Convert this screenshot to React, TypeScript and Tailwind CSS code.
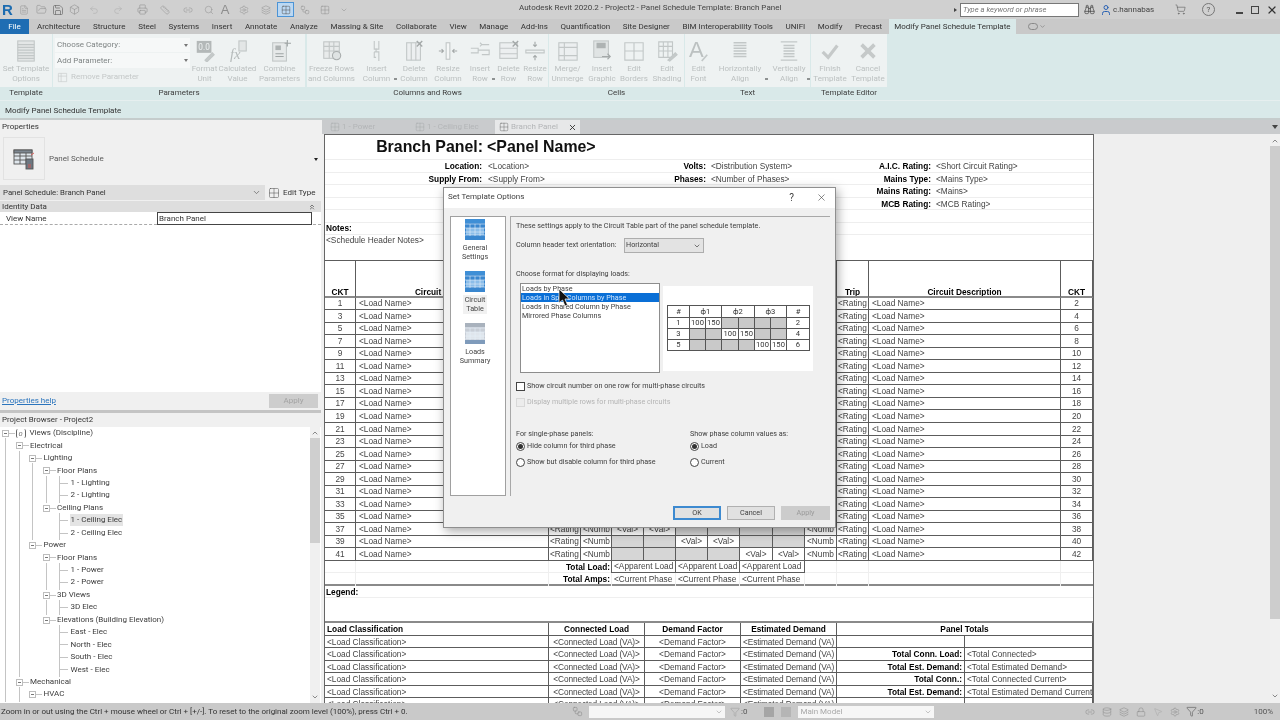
import type { ReactNode } from 'react';
import {
  Binoculars, Box, ChevronDown, ChevronUp, ChevronsUp, Database, FileText, Filter, FolderOpen, Grid2x2, Layers,
  Link2, Lock, MousePointer2, Printer, Redo2, Ruler, Save, Search, Settings, ShoppingCart, Undo2,
  User, Workflow, X,
} from 'lucide-react';

const GRID_CIRCUIT = 'grid grid-cols-[31px_193px_32px_31px_32px_32px_32px_32px_33px_32px_32px_32px_192px_32px]';
const GRID_LOADS = 'grid grid-cols-[224px_96px_96px_96px_128px_128px]';
const CELL = 'border-r border-b border-[#5c5c5c] overflow-hidden whitespace-nowrap flex items-center';

function Ico({ children, w = 22, h = 22 }: { children: ReactNode; w?: number; h?: number }) {
  return (
    <svg viewBox="0 0 24 24" width={w} height={h} fill="none" stroke="#c2c7c7" strokeWidth="1.2">
      {children}
    </svg>
  );
}

function Tool({ w, a, b, icon, arrow }: { w: string; a: string; b: string; icon: ReactNode; arrow?: boolean }) {
  return (
    <div className={`${w} relative flex flex-col items-center`}>
      <div className="h-[30px] pt-[3px] flex items-center justify-center">{icon}</div>
      <div className="text-[8px] leading-[10px] text-[#bcc1c1] text-center whitespace-nowrap">
        <div>{a}</div>
        <div>{b}</div>
      </div>
      {arrow && <span className="absolute right-[0px] top-[44px] w-[3px] h-[2px] bg-[#8e9292]" />}
    </div>
  );
}

function Panel({ w, title, children }: { w: string; title: string; children: ReactNode }) {
  return (
    <div className={`${w} flex flex-col`}>
      <div className="h-[53px] bg-[#eef2f2] flex">{children}</div>
      <div className="h-[13px] bg-[#d9e9e9] text-[8px] leading-[11px] text-center text-[#3d3d3d]">{title}</div>
    </div>
  );
}

const TableLines = () => (
  <>
    <rect x="3" y="1" width="18" height="22" fill="#e3e6e6" />
    <path d="M3 5h18M3 8h18M3 11h18M3 14h18M3 17h18M3 20h18" />
  </>
);

function Ribbon() {
  return (
    <div className="flex bg-[#d9e9e9] h-[66px]">
      <Panel w="w-[52px] mr-[1px]" title="Template">
        <Tool w="w-[52px]" a="Set Template" b="Options" icon={<Ico><TableLines /></Ico>} />
      </Panel>
      <Panel w="w-[252px] mr-[2px]" title="Parameters">
        <div className="w-[137px] pl-[2px] pt-[4px] flex flex-col">
          <div className="h-[14px] bg-[#f6f8f8] flex items-center justify-between px-[2px] text-[8px] text-[#7f8484]">
            <span>Choose Category:</span>
            <span className="w-0 h-0 border-x-[2.5px] border-x-transparent border-t-[3px] border-t-[#777]" />
          </div>
          <div className="mt-[1px] h-[15px] bg-[#f6f8f8] flex items-center justify-between px-[2px] text-[8px] text-[#7f8484]">
            <span>Add Parameter:</span>
            <span className="w-0 h-0 border-x-[2.5px] border-x-transparent border-t-[3px] border-t-[#777]" />
          </div>
          <div className="mt-[3px] flex items-center gap-[3px] pl-[2px] text-[8px] text-[#c4c8c8]">
            <Ico w={11} h={11}><path d="M3 3h18v18H3zM3 9h18M9 3v18" /></Ico>
            <span>Remove Parameter</span>
          </div>
        </div>
        <Tool w="w-[29px]" a="Format" b="Unit" icon={
          <Ico>
            <rect x="3" y="1" width="16" height="13" fill="#b3b8b8" stroke="none" />
            <text x="11" y="11" fontSize="9" fill="#eef2f2" stroke="none" textAnchor="middle">0.0</text>
            <path d="M12 22l8-8 2 2-8 8z" fill="#c5caca" />
          </Ico>
        } />
        <Tool w="w-[37px]" a="Calculated" b="Value" icon={
          <Ico>
            <rect x="13" y="1" width="8" height="11" fill="#e3e6e6" />
            <text x="9" y="21" fontSize="16" fontStyle="italic" fontFamily="Liberation Serif" fill="#b5baba" stroke="none" textAnchor="middle">fx</text>
          </Ico>
        } />
        <Tool w="w-[47px]" a="Combine" b="Parameters" icon={
          <Ico>
            <rect x="4" y="3" width="15" height="20" fill="#e6e9e9" />
            <rect x="7" y="6" width="6" height="5" fill="#aeb3b3" stroke="none" />
            <path d="M7 15h9M7 18h9M20 0v7M17 3.5h7" stroke="#9fa5a5" />
          </Ico>
        } />
      </Panel>
      <Panel w="w-[241px] mr-[1px]" title="Columns and Rows">
        <Tool w="w-[49px]" a="Freeze Rows" b="and Columns" icon={
          <Ico>
            <rect x="3" y="2" width="17" height="18" fill="#e8ebeb" />
            <path d="M3 7h17M3 12h17M9 2v18M14 2v18" />
            <circle cx="17" cy="17" r="4.5" fill="#dfe3e3" stroke="#a9aeae" />
          </Ico>
        } />
        <Tool w="w-[41px]" arrow a="Insert" b="Column" icon={
          <Ico><path d="M9 1v9h5V1M9 13h5v10M9 13v6h2M11 9v4" /></Ico>
        } />
        <Tool w="w-[34px]" a="Delete" b="Column" icon={
          <Ico>
            <rect x="4" y="3" width="15" height="19" fill="#eceff0" />
            <path d="M9 3v19M14 3v19" />
            <path d="M15 1l6 6M21 1l-6 6" stroke="#a3a8a8" strokeWidth="1.5" />
          </Ico>
        } />
        <Tool w="w-[34px]" a="Resize" b="Column" icon={
          <Ico>
            <rect x="10" y="3" width="4" height="18" fill="#f5f7f7" />
            <path d="M2 12h5M5 10l2 2-2 2M22 12h-5M19 10l-2 2 2 2" stroke="#a3a8a8" />
          </Ico>
        } />
        <Tool w="w-[30px]" arrow a="Insert" b="Row" icon={
          <Ico><path d="M2 9h8v5H2M14 5h8M14 11h8v5h-8M10 11h4M12 7l2-2-2-2" /></Ico>
        } />
        <Tool w="w-[27px]" a="Delete" b="Row" icon={
          <Ico>
            <rect x="2" y="3" width="19" height="17" fill="#eceff0" />
            <path d="M2 9h19M2 15h19" />
            <path d="M16 1l6 6M22 1l-6 6" stroke="#a3a8a8" strokeWidth="1.5" />
          </Ico>
        } />
        <Tool w="w-[26px]" a="Resize" b="Row" icon={
          <Ico>
            <path d="M2 11h20v3H2z" />
            <path d="M12 2v5M10 5l2 2 2-2M12 22v-5M10 19l2-2 2 2" stroke="#a3a8a8" />
          </Ico>
        } />
      </Panel>
      <Panel w="w-[135px] mr-[1px]" title="Cells">
        <Tool w="w-[37px]" a="Merge/" b="Unmerge" icon={
          <Ico>
            <rect x="2" y="3" width="20" height="19" fill="#eceff0" />
            <path d="M2 8h20M2 17h20M8 3v19" />
          </Ico>
        } />
        <Tool w="w-[32px]" a="Insert" b="Graphic" icon={
          <Ico>
            <rect x="3" y="1" width="16" height="18" fill="#e0e4e4" />
            <rect x="6" y="3" width="10" height="6" fill="#aeb3b3" stroke="none" />
            <path d="M12 18h9M18 15l3 3-3 3" stroke="#a3a8a8" />
          </Ico>
        } />
        <Tool w="w-[32px]" a="Edit" b="Borders" icon={<Ico><path d="M2 3h20v19H2zM2 12h20M12 3v19" /></Ico>} />
        <Tool w="w-[34px]" a="Edit" b="Shading" icon={
          <Ico>
            <path d="M3 2h15v17H3zM3 7h15M3 12h15M8 2v17M13 2v17" />
            <path d="M13 22l8-8 2 2-8 7z" fill="#c5caca" />
          </Ico>
        } />
      </Panel>
      <Panel w="w-[125px] mr-[1px]" title="Text">
        <Tool w="w-[27px]" a="Edit" b="Font" icon={
          <Ico>
            <text x="9" y="19" fontSize="24" fontFamily="Liberation Sans" fill="#bcc1c1" stroke="none" textAnchor="middle">A</text>
            <path d="M15 23l6-7" strokeWidth="1.8" />
          </Ico>
        } />
        <Tool w="w-[56px]" arrow a="Horizontally" b="Align" icon={
          <Ico><path d="M5 3h14M5 6h14M5 9h14M5 12h14M5 15h14M5 18h14" strokeWidth="1.6" /></Ico>
        } />
        <Tool w="w-[42px]" arrow a="Vertically" b="Align" icon={
          <Ico><path d="M3 2h18M6 6h12M6 9h12M6 12h12M6 15h12M6 18h12M3 22h18" strokeWidth="1.4" /></Ico>
        } />
      </Panel>
      <Panel w="w-[76px]" title="Template Editor">
        <Tool w="w-[38px]" a="Finish" b="Template" icon={<Ico><path d="M4 13l6 6L20 6" stroke="#c5c9c9" strokeWidth="3.5" /></Ico>} />
        <Tool w="w-[38px]" a="Cancel" b="Template" icon={<Ico><path d="M5 5l14 14M19 5L5 19" stroke="#c5c9c9" strokeWidth="4" /></Ico>} />
      </Panel>
    </div>
  );
}

const TABS = ['Architecture', 'Structure', 'Steel', 'Systems', 'Insert', 'Annotate', 'Analyze', 'Massing & Site', 'Collaborate', 'View', 'Manage', 'Add-Ins', 'Quantification', 'Site Designer', 'BIM Interoperability Tools', 'UNIFI', 'Modify', 'Precast'];

function TopBars() {
  return (
    <>
      <div className="h-[19px] bg-[#d0d0d0] flex items-center relative">
        <div className="w-[15px] pl-[2px] text-[15px] leading-[15px] font-bold text-[#1d6cb0] font-['Liberation_Sans',sans-serif]">R</div>
        <div className="flex items-center text-[#8e8e8e]">
          <span className="w-[17px] flex justify-center"><FileText size={10} strokeWidth={1.2} /></span>
          <span className="w-[18px] flex justify-center"><FolderOpen size={11} strokeWidth={1.2} /></span>
          <span className="w-[16px] flex justify-center text-[#6c6c6c]"><Save size={12} strokeWidth={1.4} /></span>
          <span className="w-[17px] flex justify-center"><Box size={11} strokeWidth={1.2} /></span>
          <span className="w-[22px] flex justify-center text-[#a8a8a8]"><Undo2 size={10} strokeWidth={1.2} /></span>
          <span className="w-[25px] flex justify-center text-[#a8a8a8]"><Redo2 size={10} strokeWidth={1.2} /></span>
          <span className="w-[25px] flex justify-center"><Printer size={11} strokeWidth={1.2} /></span>
          <span className="w-[20px] flex justify-center"><Ruler size={10} strokeWidth={1.2} /></span>
          <span className="w-[26px] flex justify-center"><Link2 size={10} strokeWidth={1.2} /></span>
          <span className="w-[16px] flex justify-center"><Search size={10} strokeWidth={1.2} /></span>
          <span className="w-[16px] text-center text-[13px] leading-[13px] font-['Liberation_Sans',sans-serif]">A</span>
          <span className="w-[22px] flex justify-center"><Settings size={10} strokeWidth={1.2} /></span>
          <span className="w-[22px] flex justify-center"><Layers size={10} strokeWidth={1.2} /></span>
          <span className="w-[17px] h-[15px] bg-[#bcd8f2] border border-[#4c94d6] flex items-center justify-center">
            <Grid2x2 size={10} strokeWidth={1.2} className="text-[#4f4f4f]" />
          </span>
          <span className="w-[22px] flex justify-center"><Workflow size={10} strokeWidth={1.2} /></span>
          <span className="w-[18px] flex justify-center"><Grid2x2 size={10} strokeWidth={1.2} /></span>
          <span className="w-[20px] flex justify-center"><ChevronDown size={8} strokeWidth={1.5} /></span>
        </div>
        <div className="absolute left-[519px] top-0 h-[19px] text-[8px] leading-[15px] text-[#444] whitespace-nowrap">
          Autodesk Revit 2020.2 - Project2 - Panel Schedule Template: Branch Panel
        </div>
        <div className="ml-auto flex items-center">
          <span className="w-0 h-0 mr-[3px] border-y-[2.5px] border-y-transparent border-l-[3px] border-l-[#444]" />
          <div className="w-[119px] h-[14px] bg-white border border-[#777] text-[7.6px] leading-[12px] italic text-[#777] pl-[2px]">Type a keyword or phrase</div>
          <span className="w-[21px] flex justify-center text-[#444]"><Binoculars size={11} strokeWidth={1.6} /></span>
          <User size={12} strokeWidth={2} className="text-[#2a62b3]" />
          <span className="ml-[1px] w-[62px] text-[8px] text-[#444]">c.hannabas</span>
          <ShoppingCart size={11} strokeWidth={1.2} className="text-[#555]" />
          <span className="ml-[16px] w-[13px] h-[13px] rounded-full border border-[#777] text-[8px] leading-[11px] text-center text-[#555]">?</span>
          <span className="ml-[21px] w-[7px] h-[2px] mt-[6px] bg-[#444]" />
          <span className="ml-[8px] w-[8px] h-[8px] border border-[#444]" />
          <X size={12} strokeWidth={2.4} className="ml-[7px] mr-[2px] text-[#333]" />
        </div>
      </div>
      <div className="h-[15px] bg-[#c9c9c9] flex items-stretch text-[8px] leading-[15px] text-[#333] whitespace-nowrap">
        <div className="w-[29px] bg-[#1f6db3] text-white text-center">File</div>
        <div className="ml-[8px] flex gap-[12.6px]">
          {TABS.map((t) => (
            <div key={t}>{t}</div>
          ))}
        </div>
        <div className="ml-[7px] px-[5px] bg-[#d9e9e9] text-center">Modify Panel Schedule Template</div>
        <div className="ml-[12px] flex items-center gap-[1px] text-[#777]">
          <span className="w-[10px] h-[7px] rounded-full border border-[#888]" />
          <ChevronDown size={7} />
        </div>
      </div>
      <Ribbon />
      <div className="h-[18px] bg-[#d9e9e9] border-t border-[#e6efef] text-[8px] leading-[19px] pl-[5px] text-[#333]">Modify Panel Schedule Template</div>
      <div className="h-[2px] bg-[#c5cccc]" />
    </>
  );
}

const TREE: [string, number, number[], boolean?][] = [
  ['Views (Discipline)', 0, []],
  ['Electrical', 1, [0]],
  ['Lighting', 2, [0, 1]],
  ['Floor Plans', 3, [0, 1, 2]],
  ['1 - Lighting', 4, [0, 1, 2, 3]],
  ['2 - Lighting', 4, [0, 1, 2, 3]],
  ['Ceiling Plans', 3, [0, 1, 2]],
  ['1 - Ceiling Elec', 4, [0, 1, 2], true],
  ['2 - Ceiling Elec', 4, [0, 1, 2]],
  ['Power', 2, [0, 1]],
  ['Floor Plans', 3, [0, 1]],
  ['1 - Power', 4, [0, 1, 3]],
  ['2 - Power', 4, [0, 1, 3]],
  ['3D Views', 3, [0, 1]],
  ['3D Elec', 4, [0, 1, 3]],
  ['Elevations (Building Elevation)', 3, [0, 1]],
  ['East - Elec', 4, [0, 1]],
  ['North - Elec', 4, [0, 1]],
  ['South - Elec', 4, [0, 1]],
  ['West - Elec', 4, [0, 1]],
  ['Mechanical', 1, [0]],
  ['HVAC', 2, [0, 1]],
];

function TreeRow({ text, depth, guides, selected }: { text: string; depth: number; guides: number[]; selected?: boolean }) {
  const cols = [0, 1, 2, 3, 4];
  return (
    <div className="h-[12.45px] flex items-center pl-[2px]">
      {cols.filter((c) => c <= depth).map((c) => (
        <div key={c} className="w-[13.5px] h-full relative shrink-0">
          {(guides.includes(c) || (c === 4 && depth === 4)) && <span className="absolute left-[3px] -top-px -bottom-px w-px bg-[#c4c4c4]" />}
          {c === depth && depth < 4 && (
            <>
              <span className="absolute left-[7px] top-[6px] w-[6px] h-px bg-[#c4c4c4]" />
              <span className="absolute left-0 top-[3px] w-[7px] h-[7px] bg-white border border-[#bdbdbd] flex items-center justify-center">
                <span className="w-[3px] h-px bg-[#777]" />
              </span>
            </>
          )}
          {c === 4 && <span className="absolute left-[3px] top-[6px] w-[9px] h-px bg-[#c4c4c4]" />}
        </div>
      ))}
      {depth === 0 && (
        <span className="w-[10px] h-[9px] mr-[3px] border-x border-[#666] rounded-[2px] flex items-center justify-center text-[6px] italic text-[#555]">O</span>
      )}
      <span className={`${selected ? 'bg-[#e4e4e4]' : ''} px-[1px] text-[8px] leading-[12px] text-[#3c3c3c] whitespace-nowrap`}>{text}</span>
    </div>
  );
}

function LeftPanels() {
  return (
    <div className="w-[321px] mr-px flex flex-col bg-[#f0f0f0] text-[#333]">
      <div className="h-[14px] text-[8px] leading-[14px] pl-[2px]">Properties</div>
      <div className="h-[51px] pt-[3px] pl-[3px] pr-[3px] flex items-start relative">
        <div className="w-[42px] h-[43px] border border-[#e2e2e2] flex items-center justify-center">
          <svg viewBox="0 0 24 24" width="24" height="24" fill="none" stroke="#555" strokeWidth="0.9">
            <rect x="2" y="3" width="18" height="14" fill="#dfe6ec" />
            <rect x="2" y="3" width="18" height="3" fill="#7d8791" />
            <path d="M2 9h18M2 13h18M8 6v11M14 6v11" />
            <rect x="14" y="12" width="7" height="10" fill="#6d7781" />
            <path d="M16 18h3M16 20h3M19 8l3-2" stroke="#d9534f" />
          </svg>
        </div>
        <span className="ml-[4px] mt-[16px] text-[8px] text-[#5a5a5a]">Panel Schedule</span>
        <span className="absolute right-[3px] top-[24px] w-0 h-0 border-x-[2.5px] border-x-transparent border-t-[3px] border-t-[#222]" />
      </div>
      <div className="h-[15px] flex">
        <div className="w-[265px] bg-[#dedede] flex items-center justify-between pl-[3px] pr-[4px] text-[7.8px]">
          <span>Panel Schedule: Branch Panel</span>
          <ChevronDown size={9} className="text-[#666]" />
        </div>
        <div className="flex items-center pl-[3px] text-[8px]">
          <Grid2x2 size={12} strokeWidth={1.1} className="text-[#555]" />
          <span className="ml-[3px]">Edit Type</span>
        </div>
      </div>
      <div className="h-[1px]" />
      <div className="h-[11px] bg-[#dedede] flex items-center justify-between pl-[2px] pr-[5px] text-[8px] leading-[11px]">
        <span>Identity Data</span>
        <ChevronsUp size={8} strokeWidth={2} className="text-[#444]" />
      </div>
      <div className="flex-1 bg-white">
        <div className="h-[13px] flex border-b border-dashed border-[#aaa] text-[8px] leading-[13px]">
          <div className="w-[157px] pl-[6px]">View Name</div>
          <div className="w-[155px] h-[13px] border border-[#444] pl-[1px] leading-[11px]">Branch Panel</div>
        </div>
      </div>
      <div className="h-[18px] flex items-center justify-between pl-[2px] pr-[3px] text-[8px]">
        <span className="text-[#2a74bd] underline">Properties help</span>
        <span className="w-[49px] h-[14px] bg-[#cdcdcd] text-center text-[#a3a3a3] leading-[14px]">Apply</span>
      </div>
      <div className="h-[3px] bg-[#c4c4c4]" />
      <div className="h-[14px] text-[7.9px] leading-[14px] pl-[2px]">Project Browser - Project2</div>
      <div className="h-[276px] bg-white flex overflow-hidden">
        <div className="flex-1 overflow-hidden">
          {TREE.map(([t, d, g, s], i) => (
            <TreeRow key={i} text={t} depth={d} guides={g} selected={s} />
          ))}
        </div>
        <div className="w-[10px] mr-px bg-[#f0f0f0] flex flex-col items-center text-[#555]">
          <ChevronUp size={8} strokeWidth={2} className="mt-[2px]" />
          <div className="mt-[1px] w-full h-[105px] bg-[#cfcfcf]" />
          <ChevronDown size={8} strokeWidth={2} className="mt-auto mb-[2px]" />
        </div>
      </div>
    </div>
  );
}

function DocTab({ label, w, active }: { label: string; w: string; active?: boolean }) {
  return (
    <div className={`${w} ${active ? 'bg-[#e7e8e9]' : ''} h-[14px] flex items-center pl-[4px] text-[8px] text-[#b3b5b7] whitespace-nowrap`}>
      <Grid2x2 size={10} strokeWidth={1.1} className={active ? 'text-[#666]' : 'text-[#a5a7a9]'} />
      <span className="ml-[2px]">{label}</span>
      {active && <X size={9} strokeWidth={2.4} className="ml-[10px] text-[#333]" />}
    </div>
  );
}

function HeadRow({ a, b, c, d, e, f }: { a?: string; b?: string; c?: string; d?: string; e?: string; f?: string }) {
  return (
    <div className="h-[12.5px] grid grid-cols-[160px_128px_96px_129px_96px_159px] border-b border-[#eeeeee] text-[8.3px] leading-[12px] whitespace-nowrap">
      <div className="text-right pr-[3px] font-bold text-black">{a}</div>
      <div className="pl-[3px] text-[#444]">{b}</div>
      <div className="text-right pr-[3px] font-bold text-black">{c}</div>
      <div className="pl-[2px] text-[#444]">{d}</div>
      <div className="text-right pr-[3px] font-bold text-black">{e}</div>
      <div className="pl-[2px] text-[#444]">{f}</div>
    </div>
  );
}

function CircuitRow({ i }: { i: number }) {
  const odd = i * 2 + 1;
  const mode = i % 3;
  return (
    <div className={`${GRID_CIRCUIT} h-[12.55px] text-[8.3px] text-[#444]`}>
      <div className={`${CELL} justify-center`}>{odd}</div>
      <div className={`${CELL} pl-[3px]`}>{'<Load Name>'}</div>
      <div className={`${CELL} pl-px`}>{'<Rating'}</div>
      <div className={`${CELL} pl-[2px]`}>{'<Numb'}</div>
      {[0, 1, 2, 3, 4, 5].map((c) =>
        Math.floor(c / 2) === mode ? (
          <div key={c} className={`${CELL} justify-center`}>{'<Val>'}</div>
        ) : (
          <div key={c} className={`${CELL} bg-[#d6d6d6]`} />
        ),
      )}
      <div className={`${CELL} pl-[2px]`}>{'<Numb'}</div>
      <div className={`${CELL} pl-px`}>{'<Rating'}</div>
      <div className={`${CELL} pl-[3px]`}>{'<Load Name>'}</div>
      <div className={`${CELL} justify-center`}>{odd + 1}</div>
    </div>
  );
}

function TotalRow({ label, value, boxed, heavy }: { label: string; value: string; boxed?: boolean; heavy?: boolean }) {
  const light = 'border-r border-[#efefef]';
  return (
    <div className={`${GRID_CIRCUIT} h-[12.5px] text-[8.3px] text-[#444] whitespace-nowrap ${heavy ? 'border-b-2 border-[#8a8a8a]' : 'border-b border-[#efefef]'}`}>
      <div className={light} />
      <div className={light} />
      <div className={`col-span-2 ${boxed ? 'border-r border-[#5c5c5c]' : light} flex items-center justify-end pr-px font-bold text-black`}>{label}</div>
      {[0, 1, 2].map((c) => (
        <div key={c} className={`col-span-2 overflow-hidden flex items-center pl-[2px] ${boxed ? 'border-r border-b border-[#5c5c5c]' : light}`}>{value}</div>
      ))}
      <div className={light} />
      <div className={light} />
      <div className={light} />
      <div />
    </div>
  );
}

function LoadRow({ d, e }: { d?: string; e?: string }) {
  return (
    <div className={`${GRID_LOADS} h-[12.5px] text-[8.3px] text-[#444]`}>
      <div className={`${CELL} pl-[2px]`}>{'<Load Classification>'}</div>
      <div className={`${CELL} justify-center tracking-[-0.12px]`}>{'<Connected Load (VA)>'}</div>
      <div className={`${CELL} justify-center`}>{'<Demand Factor>'}</div>
      <div className={`${CELL} pl-[2px] tracking-[-0.12px]`}>{'<Estimated Demand (VA)'}</div>
      <div className={`${CELL} justify-end pr-[2px] font-bold text-black`}>{d}</div>
      <div className={`${CELL} pl-[2px]`}>{e}</div>
    </div>
  );
}

function Schedule() {
  return (
    <div className="ml-[2px] w-[770px] border-x border-t border-[#666] bg-white font-['Liberation_Sans',Arial,sans-serif]">
      <div className="h-[25px] grid grid-cols-[160px_128px_480px] border-b border-[#eeeeee] text-[15.9px] leading-[24px] font-bold text-[#111]">
        <div className="text-right pr-[2px] whitespace-nowrap">Branch Panel:</div>
        <div className="pl-[2px] whitespace-nowrap">{'<Panel Name>'}</div>
      </div>
      <HeadRow a="Location:" b="<Location>" c="Volts:" d="<Distribution System>" e="A.I.C. Rating:" f="<Short Circuit Rating>" />
      <HeadRow a="Supply From:" b="<Supply From>" c="Phases:" d="<Number of Phases>" e="Mains Type:" f="<Mains Type>" />
      <HeadRow e="Mains Rating:" f="<Mains>" />
      <HeadRow e="MCB Rating:" f="<MCB Rating>" />
      <HeadRow />
      <div className="h-[12.5px] pl-px text-[8.3px] leading-[11px] font-bold text-black border-b border-[#eeeeee]">Notes:</div>
      <div className="h-[12.5px] pl-px text-[8.3px] leading-[11px] text-[#444]">{'<Schedule Header Notes>'}</div>
      <div className="h-[12.5px]" />
      <div className={`${GRID_CIRCUIT} h-[37.5px] border-t border-[#5c5c5c] text-[8.3px] leading-[8px] font-bold text-black`}>
        {['CKT', 'Circuit Description', 'Trip', 'Poles', 'A', '', 'B', '', 'C', '', 'Poles', 'Trip', 'Circuit Description', 'CKT'].map((t, i) => (
          <div key={i} className="border-r border-b-2 border-r-[#5c5c5c] border-b-[#8a8a8a] flex items-end justify-center overflow-hidden whitespace-nowrap">{t}</div>
        ))}
      </div>
      {Array.from({ length: 21 }, (_, i) => (
        <CircuitRow key={i} i={i} />
      ))}
      <TotalRow label="Total Load:" value="<Apparent Load" boxed />
      <TotalRow label="Total Amps:" value="<Current Phase" heavy />
      <div className={`${GRID_CIRCUIT} h-[12.5px] border-b border-[#efefef] text-[8.3px] leading-[12px] font-bold text-black`}>
        <div className="col-span-2 pl-px">Legend:</div>
      </div>
      <div className="h-[25px] border-b-2 border-[#8a8a8a]" />
      <div className={`${GRID_LOADS} h-[12.5px] text-[8.3px] font-bold text-black`}>
        <div className={`${CELL} pl-[2px]`}>Load Classification</div>
        <div className={`${CELL} justify-center`}>Connected Load</div>
        <div className={`${CELL} justify-center`}>Demand Factor</div>
        <div className={`${CELL} justify-center`}>Estimated Demand</div>
        <div className={`${CELL} col-span-2 justify-center`}>Panel Totals</div>
      </div>
      <LoadRow />
      <LoadRow d="Total Conn. Load:" e="<Total Connected>" />
      <LoadRow d="Total Est. Demand:" e="<Total Estimated Demand>" />
      <LoadRow d="Total Conn.:" e="<Total Connected Current>" />
      <LoadRow d="Total Est. Demand:" e="<Total Estimated Demand Current" />
      <LoadRow />
    </div>
  );
}

function MainArea() {
  return (
    <div className="flex-1 flex flex-col min-w-0">
      <div className="h-[14px] bg-[#c9cbcd] flex items-center relative">
        <div className="w-[4px]" />
        <DocTab label="1 - Power" w="w-[85px]" />
        <DocTab label="1 - Ceiling Elec" w="w-[84px]" />
        <DocTab label="Branch Panel" w="w-[85px]" active />
        <span className="absolute right-[2px] top-[5px] w-0 h-0 border-x-[3px] border-x-transparent border-t-[4px] border-t-[#444]" />
      </div>
      <div className="flex-1 flex min-h-0 bg-[#efefef]">
        <div className="flex-1 overflow-hidden">
          <Schedule />
        </div>
        <div className="w-[10px] flex flex-col items-center text-[#555] bg-[#f0f0f0]">
          <ChevronUp size={8} strokeWidth={2} className="mt-[3px]" />
          <div className="mt-[1px] w-full h-[473px] bg-[#cdcdcd]" />
          <ChevronDown size={8} strokeWidth={2} className="mt-auto mb-[3px]" />
        </div>
      </div>
    </div>
  );
}

function StatusBar() {
  return (
    <div className="h-[17px] bg-[#c9c9c9] flex items-center text-[8px] text-[#333] whitespace-nowrap relative">
      <span className="w-[568px] pl-[1px]">Zoom in or out using the Ctrl + mouse wheel or Ctrl + [+/-]. To reset to the original zoom level (100%), press Ctrl + 0.</span>
      <Workflow size={11} strokeWidth={1.2} className="ml-[4px] text-[#888]" />
      <div className="ml-[6px] w-[136px] h-[12px] bg-[#f6f6f6] flex items-center justify-end pr-[2px]">
        <ChevronDown size={8} className="text-[#aaa]" />
      </div>
      <Filter size={10} strokeWidth={1.2} className="ml-[5px] text-[#999]" />
      <span className="ml-[1px] text-[#555]">:0</span>
      <span className="ml-[17px] w-[10px] h-[10px] bg-[#a5a5a5]" />
      <span className="ml-[7px] w-[10px] h-[10px] bg-[#b5b5b5]" />
      <div className="ml-[7px] w-[136px] h-[12px] bg-[#f6f6f6] flex items-center justify-between pl-[2px] pr-[2px] text-[#a8a8a8]">
        Main Model
        <ChevronDown size={8} className="text-[#aaa]" />
      </div>
      <div className="ml-auto flex items-center text-[#8b8b8b]">
        <Link2 size={10} strokeWidth={1.3} className="mr-[7px]" />
        <Database size={10} strokeWidth={1.3} className="mr-[7px]" />
        <Layers size={10} strokeWidth={1.3} className="mr-[7px]" />
        <Lock size={10} strokeWidth={1.3} className="mr-[7px]" />
        <MousePointer2 size={10} strokeWidth={1.3} className="mr-[7px] text-[#aaa]" />
        <Settings size={10} strokeWidth={1.3} className="mr-[6px]" />
        <Filter size={11} strokeWidth={1.3} className="text-[#555]" />
        <span className="text-[#555] mr-[50px]">:0</span>
        <span className="text-[#555] mr-[7px]">100%</span>
      </div>
    </div>
  );
}

function NavIcon({ muted }: { muted?: boolean }) {
  const base = muted ? '#a9b2bd' : '#3f8fd6';
  return (
    <svg viewBox="0 0 20 21" width="20" height="21">
      <rect width="20" height="21" fill={muted ? '#c8ced6' : '#3a87cf'} />
      <rect y="0" width="20" height="4" fill={base} />
      <rect x="1" y="9" width="18" height="7" fill={muted ? '#dfe5ec' : '#8bbde9'} />
      <path d="M0 5h20M0 9h20M0 13h20M0 16h20M5 5v12M10 5v12M15 5v12" stroke="#e6f0fa" strokeWidth="0.6" />
      <rect y="17" width="20" height="4" fill={muted ? '#7f9bbb' : '#3a87cf'} />
    </svg>
  );
}

function Radio({ on }: { on?: boolean }) {
  return (
    <span className="w-[9px] h-[9px] rounded-full border border-[#444] bg-white flex items-center justify-center">
      {on && <span className="w-[5px] h-[5px] rounded-full bg-[#333]" />}
    </span>
  );
}

const PREVIEW = [
  ['1', '100', '150', '', '', '', '', '2'],
  ['3', '', '', '100', '150', '', '', '4'],
  ['5', '', '', '', '', '100', '150', '6'],
];

function Preview() {
  const td = 'border-r border-b border-[#555] flex items-center justify-center overflow-hidden';
  return (
    <div className="ml-[3px] w-[150px] h-[85px] mt-[3px] bg-white pl-[4px] pt-[19px]">
      <div className="w-[143px] border-t border-l border-[#555] text-[7.6px] text-[#333]">
        <div className="grid grid-cols-[22px_32px_33px_32px_23px] h-[12px]">
          {['#', 'ф1', 'ф2', 'ф3', '#'].map((t, i) => (
            <div key={i} className={td}>{t}</div>
          ))}
        </div>
        {PREVIEW.map((r) => (
          <div key={r[0]} className="grid grid-cols-[22px_16px_16px_17px_16px_16px_16px_23px] h-[11px]">
            {r.map((v, i) => (
              <div key={i} className={`${td} ${v === '' ? 'bg-[#c9c9c9]' : ''}`}>{v}</div>
            ))}
          </div>
        ))}
      </div>
    </div>
  );
}

function Dialog() {
  return (
    <div className="absolute left-[443px] top-[187px] w-[393px] h-[341px] bg-[#f0f0f0] border border-[#8f8f8f] shadow-[2px_3px_10px_rgba(0,0,0,0.35)] text-[7.2px] text-[#3d3d3d] whitespace-nowrap flex flex-col">
      <div className="h-[20px] bg-white flex items-center pl-[4px] pb-[2px] text-[8px]">
        <span>Set Template Options</span>
        <span className="ml-auto text-[10px]">?</span>
        <X size={11} strokeWidth={1.3} className="ml-[22px] mr-[8px]" />
      </div>
      <div className="flex pl-[6px] pt-[8px]">
        <div className="w-[56px] h-[280px] pr-[6px] bg-white border border-[#a0a0a0] flex flex-col items-center text-center leading-[9px] text-[#444]">
          <div className="mt-[2px]"><NavIcon /></div>
          <div className="mt-[3px]">General</div>
          <div>Settings</div>
          <div className="mt-[10px]"><NavIcon /></div>
          <div className="mt-[3px] bg-[#f1f1f1] px-[2px] pb-[1px]">
            Circuit<br />Table
          </div>
          <div className="mt-[9px]"><NavIcon muted /></div>
          <div className="mt-[3px]">Loads</div>
          <div>Summary</div>
        </div>
        <div className="ml-[4px] w-[320px] h-[280px] border-l border-t border-[#a8a8a8] pl-[5px] flex flex-col">
          <div className="mt-[4px] h-[10px] leading-[10px]">These settings apply to the Circuit Table part of the panel schedule template.</div>
          <div className="mt-[7px] h-[15px] flex items-center">
            <span className="w-[108px]">Column header text orientation:</span>
            <div className="w-[80px] h-[15px] bg-[#e3e3e3] border border-[#adadad] flex items-center justify-between pl-[1px] pr-[2px]">
              Horizontal
              <ChevronDown size={8} />
            </div>
          </div>
          <div className="mt-[16px] h-[10px] leading-[10px]">Choose format for displaying loads:</div>
          <div className="mt-[4px] flex">
            <div className="ml-[4px] w-[140px] h-[90px] bg-white border border-[#8d8d8d] leading-[9px] text-[#3d3d3d]">
              <div className="pl-px">Loads by Phase</div>
              <div className="pl-px bg-[#0a6fd6] text-[#cfe6ff]">Loads in Split Columns by Phase</div>
              <div className="pl-px">Loads in Shared Column by Phase</div>
              <div className="pl-px">Mirrored Phase Columns</div>
            </div>
            <Preview />
          </div>
          <div className="mt-[8px] h-[10px] flex items-center leading-[10px]">
            <span className="w-[9px] h-[9px] mr-[2px] bg-white border border-[#444]" />
            Show circuit number on one row for multi-phase circuits
          </div>
          <div className="mt-[6px] h-[10px] flex items-center leading-[10px] text-[#b4b4b4]">
            <span className="w-[9px] h-[9px] mr-[2px] bg-[#ececec] border border-[#d8d8d8]" />
            Display multiple rows for multi-phase circuits
          </div>
          <div className="mt-[22px] flex leading-[10px]">
            <div className="w-[174px] flex flex-col">
              <div className="h-[10px]">For single-phase panels:</div>
              <div className="mt-[2px] h-[10px] flex items-center gap-[2px]"><Radio on />Hide column for third phase</div>
              <div className="mt-[6px] h-[10px] flex items-center gap-[2px]"><Radio />Show but disable column for third phase</div>
            </div>
            <div className="flex flex-col">
              <div className="h-[10px]">Show phase column values as:</div>
              <div className="mt-[2px] h-[10px] flex items-center gap-[2px]"><Radio on />Load</div>
              <div className="mt-[6px] h-[10px] flex items-center gap-[2px]"><Radio />Current</div>
            </div>
          </div>
        </div>
      </div>
      <div className="mt-[10px] flex justify-end gap-[6px] pr-[5px] text-[7.2px] leading-[12px] text-center">
        <div className="w-[48px] h-[14px] bg-[#e1e1e1] border-2 border-[#3d8ad0] leading-[10px]">OK</div>
        <div className="w-[48px] h-[14px] bg-[#e1e1e1] border border-[#b0b0b0]">Cancel</div>
        <div className="w-[49px] h-[14px] bg-[#cccccc] text-[#9a9a9a] leading-[14px]">Apply</div>
      </div>
    </div>
  );
}

export default function App() {
  return (
    <div className="relative w-[1280px] h-[720px] overflow-hidden flex flex-col bg-[#f0f0f0] font-['Roboto',sans-serif] blur-[0.3px]">
      <TopBars />
      <div className="h-[583px] flex">
        <LeftPanels />
        <MainArea />
      </div>
      <StatusBar />
      <Dialog />
      <svg viewBox="0 0 12 19" width="12" height="19" className="absolute left-[558px] top-[288px]">
        <path d="M1 1v14l3.5-3 2.5 6 2.5-1-2.5-6h4.5z" fill="#111" stroke="#fff" strokeWidth="0.7" />
      </svg>
    </div>
  );
}
